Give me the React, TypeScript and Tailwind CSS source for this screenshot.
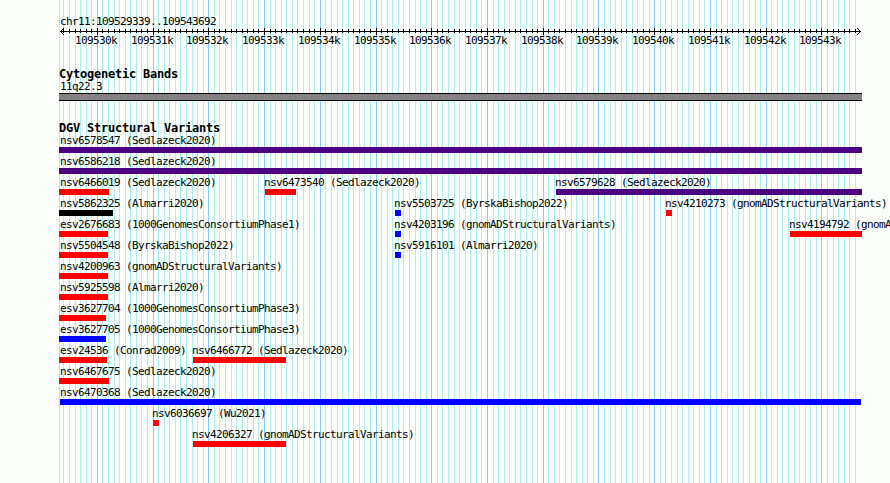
type Feature = {
  name: string;
  from: number;
  to: number;
  color: string;
};

const WIDTH = 890;
const HEIGHT = 483;
const START = 109529339;
const END = 109543692;
const LEFT = 60;
const SCALE = 800 / (END - START);

const red = "bg-[#ff0000]";
const blue = "bg-[#0000ff]";
const indigo = "bg-[#4b0082]";
const black = "bg-black";

const rows: Feature[][] = [
  [{ name: "nsv6578547 (Sedlazeck2020)", from: 59, to: 862, color: indigo }],
  [{ name: "nsv6586218 (Sedlazeck2020)", from: 59, to: 862, color: indigo }],
  [
    { name: "nsv6466019 (Sedlazeck2020)", from: 59, to: 109, color: red },
    { name: "nsv6473540 (Sedlazeck2020)", from: 265, to: 296, color: red },
    { name: "nsv6579628 (Sedlazeck2020)", from: 556, to: 862, color: indigo },
  ],
  [
    { name: "nsv5862325 (Almarri2020)", from: 59, to: 113, color: black },
    { name: "nsv5503725 (ByrskaBishop2022)", from: 395, to: 401, color: blue },
    { name: "nsv4210273 (gnomADStructuralVariants)", from: 666, to: 672, color: red },
  ],
  [
    { name: "esv2676683 (1000GenomesConsortiumPhase1)", from: 59, to: 108, color: red },
    { name: "nsv4203196 (gnomADStructuralVariants)", from: 395, to: 401, color: blue },
    { name: "nsv4194792 (gnomADStructuralVariants)", from: 790, to: 862, color: red },
  ],
  [
    { name: "nsv5504548 (ByrskaBishop2022)", from: 59, to: 108, color: red },
    { name: "nsv5916101 (Almarri2020)", from: 395, to: 401, color: blue },
  ],
  [{ name: "nsv4200963 (gnomADStructuralVariants)", from: 59, to: 108, color: red }],
  [{ name: "nsv5925598 (Almarri2020)", from: 59, to: 108, color: red }],
  [{ name: "esv3627704 (1000GenomesConsortiumPhase3)", from: 59, to: 106, color: red }],
  [{ name: "esv3627705 (1000GenomesConsortiumPhase3)", from: 59, to: 106, color: blue }],
  [
    { name: "esv24536 (Conrad2009)", from: 59, to: 107, color: red },
    { name: "nsv6466772 (Sedlazeck2020)", from: 193, to: 286, color: red },
  ],
  [{ name: "nsv6467675 (Sedlazeck2020)", from: 59, to: 109, color: red }],
  [{ name: "nsv6470368 (Sedlazeck2020)", from: 60, to: 861, color: blue }],
  [{ name: "nsv6036697 (Wu2021)", from: 153, to: 159, color: red }],
  [{ name: "nsv4206327 (gnomADStructuralVariants)", from: 193, to: 286, color: red }],
];

const toX = (pos: number) => Math.round(LEFT + (pos - START) * SCALE);

// one tick every 100 bases, a major one every 1000
const ticks: { pos: number; x: number; major: boolean }[] = [];
for (let pos = 109529400; pos < 109543650; pos += 100) {
  ticks.push({ pos, x: toX(pos), major: pos % 1000 === 0 });
}
const majorTicks = ticks.filter((t) => t.major);

const labelText = "font-['DejaVu_Sans_Mono',monospace] text-[11px] leading-[12px] tracking-[-0.622px] whitespace-pre";
const titleText = "font-['DejaVu_Sans_Mono',monospace] text-[12px] leading-[12px] font-bold tracking-[-0.224px] whitespace-pre";

const GridLines = () => (
  <svg className="absolute inset-0" width={WIDTH} height={HEIGHT} shapeRendering="crispEdges">
    <rect x={59} y={0} width={1} height={HEIGHT} fill="#afeeee" />
    {ticks.map((t) => (
      <rect key={t.pos} x={t.x} y={0} width={1} height={HEIGHT} fill={t.major ? "#87cefa" : "#afeeee"} />
    ))}
  </svg>
);

const Ruler = () => (
  <svg className="block" width={WIDTH} height={7} shapeRendering="crispEdges">
    <rect x={60} y={3} width={801} height={1} />
    {ticks.map((t) => (
      <rect key={t.pos} x={t.x} y={t.major ? 0 : 1} width={1} height={t.major ? 7 : 4} />
    ))}
    {[1, 2, 3].map((i) => (
      <g key={i}>
        <rect x={60 + i} y={3 - i} width={1} height={1} />
        <rect x={60 + i} y={3 + i} width={1} height={1} />
        <rect x={860 - i} y={3 - i} width={1} height={1} />
        <rect x={860 - i} y={3 + i} width={1} height={1} />
      </g>
    ))}
  </svg>
);

const FeatureRow = ({ features }: { features: Feature[] }) => (
  <div className="grid h-[21px] grid-cols-[890px]">
    {features.map((f) => (
      <div key={f.name} className="col-start-1 row-start-1">
        <p className={labelText} style={{ marginLeft: Math.max(60, f.from - 1) }}>
          {f.name}
        </p>
        <div className={`h-[6px] ${f.color}`} style={{ marginLeft: f.from, width: f.to - f.from }} />
      </div>
    ))}
  </div>
);

export default function App() {
  return (
    <div className="relative h-[483px] w-[890px] overflow-hidden bg-[#fcfefc] text-black">
      <GridLines />
      <div className="relative flex flex-col pt-[16px]">
        <p className={`${labelText} pl-[60px]`}>chr11:109529339..109543692</p>
        <Ruler />
        <div className="grid h-[12px] grid-cols-[890px]">
          {majorTicks.map((t) => (
            <span key={t.pos} className={`${labelText} col-start-1 row-start-1`} style={{ marginLeft: t.x - 22 }}>
              {t.pos / 1000}k
            </span>
          ))}
        </div>

        <section className="pt-[21px]">
          <h2 className={`${titleText} pb-px pl-[59px]`}>Cytogenetic Bands</h2>
          <p className={`${labelText} pl-[60px]`}>11q22.3</p>
          <div className="ml-[59px] h-[8px] w-[803px] border-y border-black bg-[#848284]" />
        </section>

        <section className="pt-[21px]">
          <h2 className={`${titleText} pb-px pl-[59px]`}>DGV Structural Variants</h2>
          {rows.map((features) => (
            <FeatureRow key={features[0].name} features={features} />
          ))}
        </section>
      </div>
    </div>
  );
}
